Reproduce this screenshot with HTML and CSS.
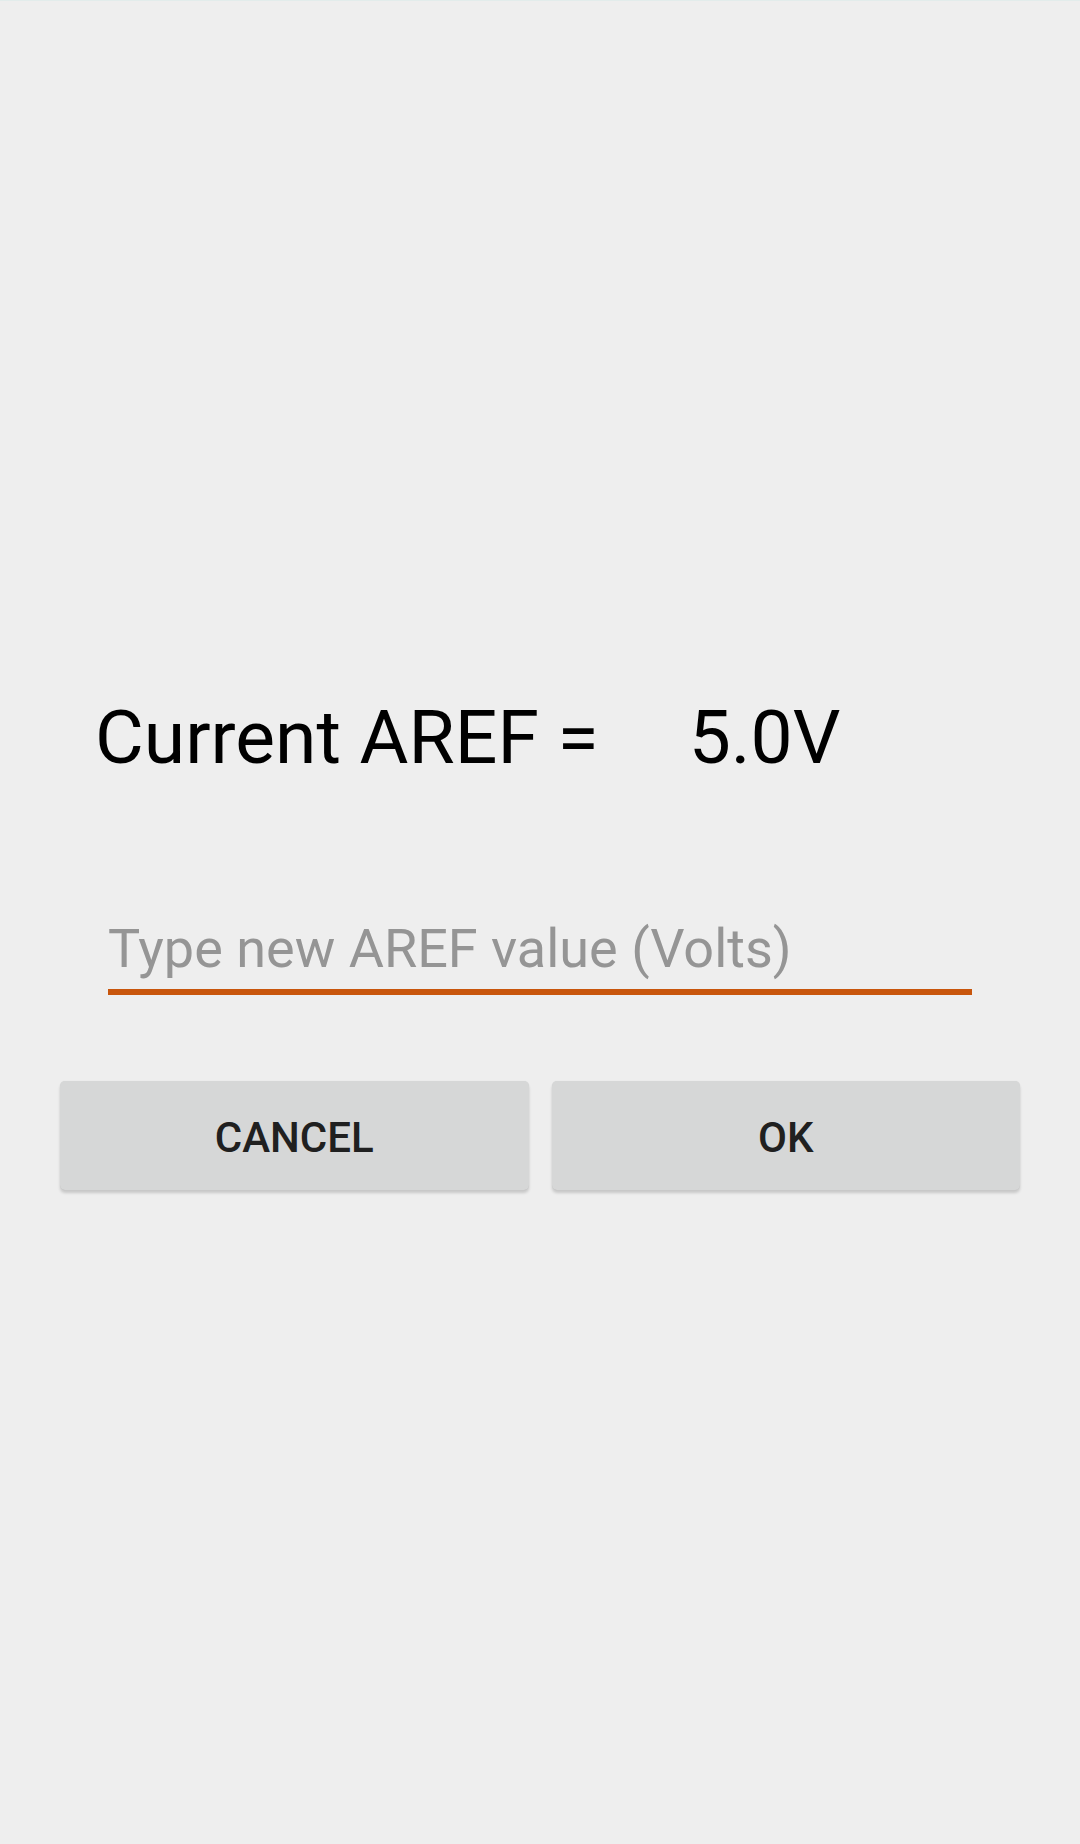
FILE: index.html
```html
<!DOCTYPE html>
<html>
<head>
<meta charset="utf-8">
<link rel="stylesheet" href="styles.css">
</head>
<body>
<div class="screen">
  <div class="title">
    <span class="label">Current AREF =</span>
    <span class="value">5.0V</span>
  </div>
  <div class="field">
    <span class="placeholder">Type new AREF value (Volts)</span>
  </div>
  <div class="actions">
    <div class="btn">CANCEL</div>
    <div class="btn">OK</div>
  </div>
</div>
</body>
</html>
```

FILE: styles.css
```css
html, body {
  margin: 0;
  padding: 0;
  background: #eeeeee;
}
body {
  width: 1080px;
  height: 1844px;
  border-top: 1px solid #e2eceb;
  box-sizing: border-box;
  font-family: Roboto, "Noto Sans", sans-serif;
}
.screen {
  display: flex;
  flex-direction: column;
  padding-top: 692px;
}
.title {
  display: flex;
  align-items: baseline;
  padding-left: 95px;
  font-size: 75px;
  line-height: 88px;
  color: #000;
}
.value {
  margin-left: 90px;
}
.field {
  margin: 136px 0 0 108px;
  width: 864px;
  padding-bottom: 8px;
  border-bottom: 6px solid #c8560c;
  font-size: 54px;
  line-height: 64px;
  color: #959595;
}
.placeholder {
  display: block;
}
.actions {
  display: flex;
  gap: 23px;
  margin: 86px 60px 0 60px;
}
.btn {
  flex: 1;
  height: 109px;
  box-sizing: border-box;
  padding-top: 4px;
  display: flex;
  align-items: center;
  justify-content: center;
  background: #d6d7d7;
  border-radius: 5px;
  box-shadow: 0 3px 3px rgba(0,0,0,0.16), 0 0 1px rgba(0,0,0,0.1);
  font-size: 42px;
  font-weight: 500;
  color: #202020;
}
```
